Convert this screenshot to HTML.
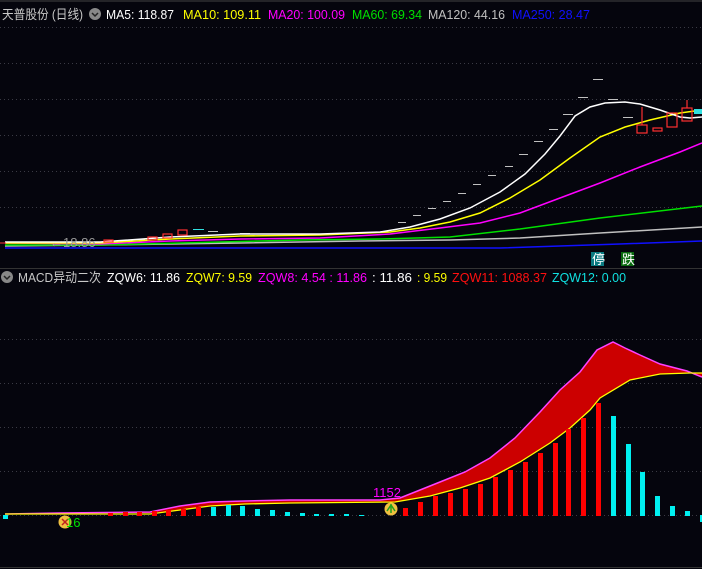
<!DOCTYPE html>
<html><head><meta charset="utf-8"><style>
html,body{margin:0;padding:0;background:#05050d;}
svg{display:block}
text{font-family:"Liberation Sans","Noto Sans CJK SC",sans-serif;font-size:13px}
</style></head><body>
<svg width="702" height="569" viewBox="0 0 702 569" xmlns="http://www.w3.org/2000/svg">
<rect width="702" height="569" fill="#05050d"/>
<line x1="0" y1="1" x2="702" y2="1" stroke="#444" stroke-width="1"/>
<g stroke="#3a3a44" stroke-dasharray="1,3" stroke-width="1">
<line x1="0" y1="27.5" x2="702" y2="27.5"/><line x1="0" y1="63.5" x2="702" y2="63.5"/>
<line x1="0" y1="99.5" x2="702" y2="99.5"/><line x1="0" y1="135.5" x2="702" y2="135.5"/>
<line x1="0" y1="171.5" x2="702" y2="171.5"/><line x1="0" y1="207.5" x2="702" y2="207.5"/>
<line x1="0" y1="339.5" x2="702" y2="339.5"/><line x1="0" y1="383.5" x2="702" y2="383.5"/>
<line x1="0" y1="427.5" x2="702" y2="427.5"/><line x1="0" y1="471.5" x2="702" y2="471.5"/>
<line x1="0" y1="515.5" x2="702" y2="515.5"/>
</g>
<line x1="0" y1="268.5" x2="702" y2="268.5" stroke="#333" />
<line x1="0" y1="567.5" x2="702" y2="567.5" stroke="#333" />
<!-- header top -->
<text x="2" y="19" fill="#c8c8c8" textLength="81" lengthAdjust="spacingAndGlyphs">天普股份 (日线)</text>
<circle cx="95" cy="14" r="6" fill="#888"/><path d="M92 13 L95 16 L98 13" stroke="#222" stroke-width="1.5" fill="none"/>
<text x="106" y="19" fill="#ffffff" textLength="68" lengthAdjust="spacingAndGlyphs">MA5: 118.87</text>
<text x="183" y="19" fill="#ffff00" textLength="78" lengthAdjust="spacingAndGlyphs">MA10: 109.11</text>
<text x="268" y="19" fill="#ff00ff" textLength="77" lengthAdjust="spacingAndGlyphs">MA20: 100.09</text>
<text x="352" y="19" fill="#00e000" textLength="70" lengthAdjust="spacingAndGlyphs">MA60: 69.34</text>
<text x="428" y="19" fill="#c0c0c0" textLength="77" lengthAdjust="spacingAndGlyphs">MA120: 44.16</text>
<text x="512" y="19" fill="#1010ff" textLength="78" lengthAdjust="spacingAndGlyphs">MA250: 28.47</text>
<!-- dash marks -->
<g stroke="#c0c0c0" stroke-width="1">
<line x1="398" y1="222.5" x2="406" y2="222.5"/><line x1="413" y1="215.5" x2="421" y2="215.5"/>
<line x1="428" y1="208.5" x2="436" y2="208.5"/><line x1="443" y1="201.5" x2="451" y2="201.5"/>
<line x1="458" y1="193.5" x2="466" y2="193.5"/><line x1="473" y1="184.5" x2="481" y2="184.5"/>
<line x1="488" y1="175.5" x2="496" y2="175.5"/><line x1="505" y1="166.5" x2="513" y2="166.5"/>
<line x1="519" y1="154.5" x2="528" y2="154.5"/><line x1="534" y1="141.5" x2="543" y2="141.5"/>
<line x1="549" y1="129.5" x2="558" y2="129.5"/><line x1="563" y1="114.5" x2="573" y2="114.5"/>
<line x1="578" y1="97.5" x2="588" y2="97.5"/><line x1="593" y1="79.5" x2="603" y2="79.5"/>
<line x1="608" y1="99.5" x2="618" y2="99.5"/><line x1="623" y1="117.5" x2="633" y2="117.5"/>
<line x1="105" y1="241.5" x2="115" y2="241.5"/><line x1="120" y1="240.5" x2="130" y2="240.5"/>
<line x1="135" y1="239.5" x2="145" y2="239.5"/><line x1="208" y1="231.5" x2="218" y2="231.5"/>
<line x1="225" y1="234.5" x2="235" y2="234.5"/><line x1="240" y1="233.5" x2="250" y2="233.5"/>
</g>
<!-- MA lines -->
<polyline fill="none" stroke="#1010ff" stroke-width="1.5" points="5,248 210,248 360,248 500,248 560,246 620,244 702,241"/>
<polyline fill="none" stroke="#c0c0c0" stroke-width="1.5" points="5,246 100,245 240,243 360,241 450,240 520,238 600,233 702,227"/>
<polyline fill="none" stroke="#00e000" stroke-width="1.5" points="5,245 100,245 220,242 300,240 380,239 450,237 520,229 600,218 702,206"/>
<polyline fill="none" stroke="#ff00ff" stroke-width="1.5" points="5,243 100,244 170,241 240,239 320,238 390,234 440,228 480,223 520,213 560,198 600,183 640,167 680,152 702,143"/>
<polyline fill="none" stroke="#ffff00" stroke-width="1.5" points="5,243 100,243 170,239 240,236 320,235 390,232 420,228 450,222 480,213 510,198 540,180 570,158 600,137 625,127 650,120 680,113 702,110"/>
<polyline fill="none" stroke="#ffffff" stroke-width="1.5" points="5,242 100,242 170,237 240,234 320,234 380,232 410,227 440,219 470,208 500,192 525,174 545,154 560,136 575,116 590,107 605,103 625,102 640,104 660,110 680,117 690,118 702,117"/>
<!-- candles -->
<g fill="none" stroke="#ff3030" stroke-width="1.2">
<rect x="178" y="230" width="9" height="5"/><rect x="163" y="234" width="9" height="4"/>
<rect x="148" y="237" width="9" height="3"/><rect x="104" y="240" width="9" height="2"/>
<rect x="637" y="125" width="10" height="8"/><line x1="642" y1="107" x2="642" y2="125"/>
<rect x="653" y="128" width="9" height="3"/>
<rect x="667" y="113" width="10" height="14"/><rect x="682" y="108" width="10" height="13"/><line x1="687" y1="100" x2="687" y2="108"/>
</g>
<rect x="694" y="109" width="8" height="5" fill="#30e0e0"/>
<line x1="193" y1="229.5" x2="204" y2="229.5" stroke="#30e0e0"/>
<text x="50" y="247" fill="#999" font-size="12">←18.86</text>
<line x1="0" y1="243" x2="6" y2="243" stroke="#f33"/>
<!-- 停 跌 -->
<rect x="591" y="252" width="13" height="14" fill="#0a7a80"/><text x="592" y="264" fill="#fff" font-size="12">停</text>
<rect x="621" y="252" width="13" height="14" fill="#0a6a10"/><text x="622" y="264" fill="#fff" font-size="12">跌</text>
<!-- lower header -->
<circle cx="7" cy="277" r="6" fill="#888"/><path d="M4 276 L7 279 L10 276" stroke="#222" stroke-width="1.5" fill="none"/>
<text x="18" y="282" fill="#c8c8c8" textLength="83" lengthAdjust="spacingAndGlyphs">MACD异动二次</text>
<text x="107" y="282" fill="#ffffff" textLength="73" lengthAdjust="spacingAndGlyphs">ZQW6: 11.86</text>
<text x="186" y="282" fill="#ffff00" textLength="66" lengthAdjust="spacingAndGlyphs">ZQW7: 9.59</text>
<text x="258" y="282" fill="#ff00ff" textLength="109" lengthAdjust="spacingAndGlyphs">ZQW8: 4.54 : 11.86</text>
<text x="372" y="282" fill="#ffffff" textLength="40" lengthAdjust="spacingAndGlyphs">: 11.86</text>
<text x="417" y="282" fill="#ffff00" textLength="30" lengthAdjust="spacingAndGlyphs">: 9.59</text>
<text x="452" y="282" fill="#ff1010" textLength="95" lengthAdjust="spacingAndGlyphs">ZQW11: 1088.37</text>
<text x="552" y="282" fill="#10e0e0" textLength="74" lengthAdjust="spacingAndGlyphs">ZQW12: 0.00</text>
<!-- fill area -->
<polygon fill="#cc0000" points="60,513 150,512 180,506 210,502 245,501 290,500 380,500 400,498 420,490 440,482 465,472 490,458 515,438 540,412 560,390 580,372 597,350 613,342 625,348 640,355 660,364 687,371 702,377 702,373 690,373 660,374 630,380 600,398 590,410 570,428 550,443 520,462 490,478 460,488 430,496 395,502 290,503 245,504 210,506 180,510 150,513"/>
<polyline fill="none" stroke="#ff40ff" stroke-width="1.5" points="5,514 60,513 150,512 180,506 210,502 245,501 290,500 380,500 400,498 420,490 440,482 465,472 490,458 515,438 540,412 560,390 580,372 597,350 613,342 625,348 640,355 660,364 687,371 702,377"/>
<polyline fill="none" stroke="#ffff00" stroke-width="1.3" points="5,514 60,514 150,514 180,510 210,506 245,504 290,503 395,502 430,496 460,488 490,478 520,462 550,443 570,428 590,410 600,398 630,380 660,374 690,373 702,373"/>
<!-- histogram -->
<g fill="#ff0000">
<rect x="403" y="508" width="5" height="8"/><rect x="418" y="502" width="5" height="14"/><rect x="433" y="496" width="5" height="20"/>
<rect x="448" y="493" width="5" height="23"/><rect x="463" y="489" width="5" height="27"/><rect x="478" y="484" width="5" height="32"/>
<rect x="493" y="477" width="5" height="39"/><rect x="508" y="470" width="5" height="46"/><rect x="523" y="462" width="5" height="54"/>
<rect x="538" y="453" width="5" height="63"/><rect x="553" y="443" width="5" height="73"/><rect x="566" y="429" width="5" height="87"/>
<rect x="581" y="418" width="5" height="98"/><rect x="596" y="403" width="5" height="113"/>
<rect x="108" y="513" width="5" height="3"/><rect x="123" y="512" width="5" height="4"/><rect x="137" y="512" width="5" height="4"/>
<rect x="152" y="511" width="5" height="5"/><rect x="166" y="510" width="5" height="6"/><rect x="181" y="509" width="5" height="7"/><rect x="196" y="507" width="5" height="9"/>
</g>
<g fill="#00f0f0">
<rect x="611" y="416" width="5" height="100"/><rect x="626" y="444" width="5" height="72"/><rect x="640" y="472" width="5" height="44"/>
<rect x="655" y="496" width="5" height="20"/><rect x="670" y="506" width="5" height="10"/><rect x="685" y="511" width="5" height="5"/>
<rect x="700" y="515" width="5" height="7"/>
<rect x="211" y="507" width="5" height="9"/><rect x="226" y="505" width="5" height="11"/><rect x="240" y="506" width="5" height="10"/>
<rect x="255" y="509" width="5" height="7"/><rect x="270" y="510" width="5" height="6"/><rect x="285" y="512" width="5" height="4"/>
<rect x="300" y="513" width="5" height="3"/><rect x="314" y="514" width="5" height="2"/><rect x="329" y="514" width="5" height="2"/>
<rect x="344" y="514" width="5" height="2"/><rect x="359" y="515" width="5" height="1"/><rect x="3" y="515" width="5" height="4"/>
</g>
<!-- markers -->
<text x="373" y="497" fill="#ff00ff" font-size="13">1152</text>
<circle cx="391" cy="509" r="6.5" fill="#f0c040"/><path d="M391 504 L391 513 M387 511 L391 505 L395 511" stroke="#20a020" stroke-width="1.5" fill="none"/>
<circle cx="65" cy="522" r="6.5" fill="#f0c040"/><path d="M62 519 L68 525 M68 519 L62 525" stroke="#c02020" stroke-width="1.5"/>
<text x="66" y="527" fill="#00e000" font-size="13">16</text>
</svg>
</body></html>
